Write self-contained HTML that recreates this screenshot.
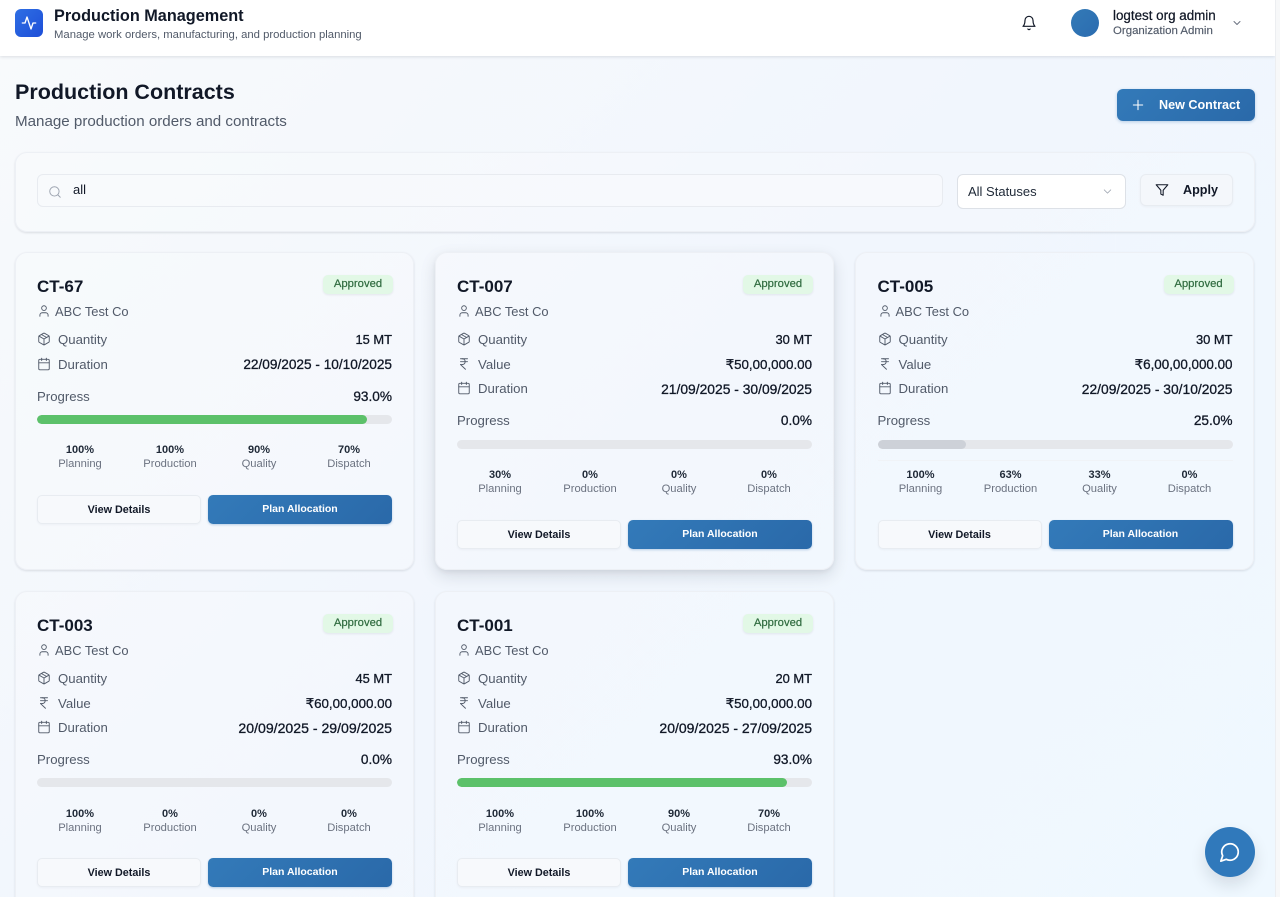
<!DOCTYPE html>
<html lang="en"><head><meta charset="utf-8"><title>Production Contracts</title>
<style>
*{box-sizing:border-box;margin:0;padding:0}
html,body{width:1280px;height:897px;overflow:hidden}
body{position:relative;font-family:"Liberation Sans",sans-serif;background:linear-gradient(135deg,#f8fafc 0%,#f1f6fd 50%,#eff8ff 100%);color:#111827}
.t{position:absolute;white-space:nowrap;line-height:20px;height:20px}
svg.i{position:absolute;fill:none;stroke:currentColor;stroke-width:2;stroke-linecap:round;stroke-linejoin:round}
.hdr{position:absolute;left:0;top:0;width:1275px;height:56px;background:#fff;box-shadow:0 1px 3px rgba(15,23,42,.12)}
.sb{position:absolute;left:1275px;top:0;width:5px;height:897px;background:#f7f8f9;border-left:1px solid #eceef1}
.logo{position:absolute;left:15px;top:9px;width:28px;height:28px;border-radius:6px;background:linear-gradient(135deg,#2f6fe4,#1d4ed8);color:#fff}
.avatar{position:absolute;left:1071px;top:9px;width:28px;height:28px;border-radius:50%;background:linear-gradient(135deg,#337ab7,#2b6cb0)}
.newb{position:absolute;left:1117px;top:89px;width:138px;height:32px;border-radius:6px;background:linear-gradient(135deg,#337ab9,#2a69a9);box-shadow:0 1px 3px rgba(43,108,176,.3);color:#fff}
.filter{position:absolute;left:15px;top:152px;width:1240px;height:80px;border-radius:12px;background:rgba(255,255,255,.18);border:1px solid #edf0f5;box-shadow:0 1px 2px rgba(15,23,42,.12)}
.search{position:absolute;left:37px;top:174px;width:906px;height:33px;border-radius:6px;background:rgba(248,250,252,.7);border:1px solid #e8ebf0}
.sel{position:absolute;left:957px;top:174px;width:169px;height:35px;border-radius:6px;background:#fff;border:1px solid #dde1e7}
.apply{position:absolute;left:1140px;top:174px;width:93px;height:32px;border-radius:6px;background:#f4f7fb;border:1px solid #e8ecf1;box-shadow:0 1px 2px rgba(15,23,42,.04)}
.c{position:absolute;width:399px;height:318px;border-radius:12px;background:rgba(255,255,255,.18);border:1px solid #edf0f5;box-shadow:0 1px 2px rgba(15,23,42,.12)}
.c.hov{box-shadow:0 6px 16px rgba(15,23,42,.12),0 2px 5px rgba(15,23,42,.06)}
.c>*{margin:-1px 0 0 -1px}
.c>.t{margin-top:1px}
.c>.ti{margin-top:0}
.c.c3>*{margin-left:-.5px}
.c.c3>.va{margin-left:0;margin-right:-.5px}
.ti{left:22px;top:24px;font-size:17px;font-weight:700;color:#111827}
.bd{left:308px;top:23px;width:70px;height:19px;border-radius:5px;background:#e2f8e6;box-shadow:0 1px 2px rgba(15,23,42,.08);color:#2f6b3f;font-size:11.3px;line-height:18px;text-align:center;position:absolute;-webkit-text-stroke:.2px #2f6b3f}
.cu{left:40px;top:48px;font-size:12.9px;color:#515a69}
.la{left:43px;font-size:13.2px;color:#515a69}
.va{right:21px;font-size:13.65px;color:#111827;-webkit-text-stroke:.3px #111827}
.mt{font-size:12.9px}
.ru{font-size:13.35px}
.pl{left:22px;font-size:13.2px;color:#515a69}
.bar{position:absolute;left:22px;width:355px;height:9px;border-radius:5px;background:#e5e7eb;overflow:hidden}
.bar i{display:block;height:9px;border-radius:5px}
.st{width:90px;text-align:center}
.sv{font-size:11px;font-weight:700;color:#1f2937}
.sl{font-size:11.2px;color:#6b7280}
.s1{left:20px}.s2{left:110px}.s3{left:199px}.s4{left:289px}
.bv{position:absolute;left:22px;width:164px;height:29px;border-radius:5px;background:#f7f9fc;border:1px solid #e8ecf1;box-shadow:0 1px 2px rgba(15,23,42,.04);font-size:10.8px;font-weight:700;color:#111827;line-height:28px;text-align:center}
.bp{position:absolute;left:193px;width:184px;height:29px;border-radius:5px;background:linear-gradient(135deg,#337ab9,#2a69a9);box-shadow:0 1px 2px rgba(43,108,176,.3);font-size:10.5px;font-weight:700;color:#fff;line-height:29px;text-align:center}
.fab{position:absolute;left:1205px;top:827px;width:50px;height:50px;border-radius:50%;background:#3079bb;color:#fff;box-shadow:0 8px 16px rgba(15,23,42,.12)}
</style></head><body>
<svg width="0" height="0" style="position:absolute"><defs>
<symbol id="user" viewBox="0 0 24 24"><path d="M19 21v-2a4 4 0 0 0-4-4H9a4 4 0 0 0-4 4v2"/><circle cx="12" cy="7" r="4"/></symbol>
<symbol id="box" viewBox="0 0 24 24"><path d="M21 16V8a2 2 0 0 0-1-1.73l-7-4a2 2 0 0 0-2 0l-7 4A2 2 0 0 0 3 8v8a2 2 0 0 0 1 1.73l7 4a2 2 0 0 0 2 0l7-4A2 2 0 0 0 21 16z"/><path d="m7.5 4.27 9 5.15"/><path d="M3.3 7 12 12l8.7-5"/><path d="M12 22V12"/></symbol>
<symbol id="cal" viewBox="0 0 24 24"><path d="M8 2v4"/><path d="M16 2v4"/><rect x="3" y="4" width="18" height="18" rx="2"/><path d="M3 10h18"/></symbol>
<symbol id="inr" viewBox="0 0 24 24"><path d="M6 3h12"/><path d="M6 8h12"/><path d="m6 13 8.5 8"/><path d="M6 13h3"/><path d="M9 13c6.667 0 6.667-10 0-10"/></symbol>
</defs></svg>

<div class="hdr"></div>
<div class="sb"></div>
<div class="logo"><svg class="i" style="left:6px;top:6px" width="16" height="16" viewBox="0 0 24 24"><path d="M22 12h-4l-3 9L9 3l-3 9H2"/></svg></div>
<div class="t" style="left:54px;top:6px;font-size:16.25px;font-weight:700;color:#111827">Production Management</div>
<div class="t" style="left:54px;top:25px;font-size:11.3px;color:#515a69">Manage work orders, manufacturing, and production planning</div>
<svg class="i" style="left:1021px;top:15px;color:#111827;stroke-width:1.8" width="16" height="16" viewBox="0 0 24 24"><path d="M6 8a6 6 0 0 1 12 0c0 7 3 9 3 9H3s3-2 3-9"/><path d="M10.3 21a1.94 1.94 0 0 0 3.4 0"/></svg>
<div class="avatar"></div>
<div class="t" style="left:1113px;top:6px;font-size:13.4px;color:#111827;-webkit-text-stroke:.25px #111827">logtest org admin</div>
<div class="t" style="left:1113px;top:21px;font-size:11.45px;color:#515a69;-webkit-text-stroke:.15px #515a69">Organization Admin</div>
<svg class="i" style="left:1231px;top:17px;color:#6b7280" width="12" height="12" viewBox="0 0 24 24"><path d="m6 9 6 6 6-6"/></svg>

<div class="t" style="left:15px;top:80px;height:24px;line-height:24px;font-size:21.5px;font-weight:700;color:#111827">Production Contracts</div>
<div class="t" style="left:15px;top:111px;line-height:22px;height:22px;font-size:15.15px;color:#515a69">Manage production orders and contracts</div>
<div class="newb"><svg class="i" style="left:13px;top:8px;stroke-width:1.6" width="16" height="16" viewBox="0 0 24 24"><path d="M5 12h14"/><path d="M12 5v14"/></svg><div class="t" style="left:42px;top:6px;font-size:12.6px;font-weight:700">New Contract</div></div>

<div class="filter"></div>
<div class="search"></div>
<svg class="i" style="left:48px;top:185px;color:#9ca3af;stroke-width:1.6" width="14" height="14" viewBox="0 0 24 24"><circle cx="11" cy="11" r="8"/><path d="m21 21-4.3-4.3"/></svg>
<div class="t" style="left:73px;top:180px;font-size:13px;color:#111827">all</div>
<div class="sel"></div>
<div class="t" style="left:968px;top:182px;font-size:13px;color:#1f2937">All Statuses</div>
<svg class="i" style="left:1101px;top:185px;color:#9ca3af;stroke-width:1.6" width="13" height="13" viewBox="0 0 24 24"><path d="m6 9 6 6 6-6"/></svg>
<div class="apply"></div>
<svg class="i" style="left:1155px;top:183px;color:#111827;stroke-width:1.8" width="14" height="14" viewBox="0 0 24 24"><polygon points="22 3 2 3 10 12.46 10 19 14 21 14 12.46 22 3"/></svg>
<div class="t" style="left:1183px;top:180px;font-size:12.6px;font-weight:700;color:#111827">Apply</div>

<!-- Card 1 -->
<div class="c" style="left:15px;top:252px">
<div class="t ti">CT-67</div><div class="bd">Approved</div>
<svg class="i" style="left:22px;top:52px;color:#515a69;stroke-width:1.6" width="14" height="14"><use href="#user"/></svg><div class="t cu">ABC Test Co</div>
<svg class="i" style="left:22px;top:80px;color:#515a69;stroke-width:1.6" width="14" height="14"><use href="#box"/></svg><div class="t la" style="top:76px">Quantity</div><div class="t va mt" style="top:76px">15 MT</div>
<svg class="i" style="left:22px;top:105px;color:#515a69;stroke-width:1.6" width="14" height="14"><use href="#cal"/></svg><div class="t la" style="top:101px">Duration</div><div class="t va" style="top:101px">22/09/2025 - 10/10/2025</div>
<div class="t pl" style="top:133px">Progress</div><div class="t va" style="top:133px">93.0%</div>
<div class="bar" style="top:163px"><i style="width:330px;background:#5cc16a"></i></div>
<div class="t st sv s1" style="top:186px">100%</div><div class="t st sl s1" style="top:200px">Planning</div>
<div class="t st sv s2" style="top:186px">100%</div><div class="t st sl s2" style="top:200px">Production</div>
<div class="t st sv s3" style="top:186px">90%</div><div class="t st sl s3" style="top:200px">Quality</div>
<div class="t st sv s4" style="top:186px">70%</div><div class="t st sl s4" style="top:200px">Dispatch</div>
<div class="bv" style="top:243px">View Details</div><div class="bp" style="top:243px">Plan Allocation</div>
</div>

<!-- Card 2 -->
<div class="c hov" style="left:435px;top:252px">
<div class="t ti">CT-007</div><div class="bd">Approved</div>
<svg class="i" style="left:22px;top:52px;color:#515a69;stroke-width:1.6" width="14" height="14"><use href="#user"/></svg><div class="t cu">ABC Test Co</div>
<svg class="i" style="left:22px;top:80px;color:#515a69;stroke-width:1.6" width="14" height="14"><use href="#box"/></svg><div class="t la" style="top:76px">Quantity</div><div class="t va mt" style="top:76px">30 MT</div>
<svg class="i" style="left:22px;top:105px;color:#515a69;stroke-width:1.6" width="14" height="14"><use href="#inr"/></svg><div class="t la" style="top:101px">Value</div><div class="t va ru" style="top:101px">₹50,00,000.00</div>
<svg class="i" style="left:22px;top:129px;color:#515a69;stroke-width:1.6" width="14" height="14"><use href="#cal"/></svg><div class="t la" style="top:125px">Duration</div><div class="t va" style="top:125px;font-size:13.85px">21/09/2025 - 30/09/2025</div>
<div class="t pl" style="top:157px">Progress</div><div class="t va" style="top:157px">0.0%</div>
<div class="bar" style="top:188px"></div>
<div class="t st sv s1" style="top:211px">30%</div><div class="t st sl s1" style="top:225px">Planning</div>
<div class="t st sv s2" style="top:211px">0%</div><div class="t st sl s2" style="top:225px">Production</div>
<div class="t st sv s3" style="top:211px">0%</div><div class="t st sl s3" style="top:225px">Quality</div>
<div class="t st sv s4" style="top:211px">0%</div><div class="t st sl s4" style="top:225px">Dispatch</div>
<div class="bv" style="top:267.5px">View Details</div><div class="bp" style="top:267.5px">Plan Allocation</div>
</div>

<!-- Card 3 -->
<div class="c c3" style="left:855px;top:252px">
<div class="t ti">CT-005</div><div class="bd">Approved</div>
<svg class="i" style="left:22px;top:52px;color:#515a69;stroke-width:1.6" width="14" height="14"><use href="#user"/></svg><div class="t cu">ABC Test Co</div>
<svg class="i" style="left:22px;top:80px;color:#515a69;stroke-width:1.6" width="14" height="14"><use href="#box"/></svg><div class="t la" style="top:76px">Quantity</div><div class="t va mt" style="top:76px">30 MT</div>
<svg class="i" style="left:22px;top:105px;color:#515a69;stroke-width:1.6" width="14" height="14"><use href="#inr"/></svg><div class="t la" style="top:101px">Value</div><div class="t va" style="top:101px;font-size:13.4px">₹6,00,00,000.00</div>
<svg class="i" style="left:22px;top:129px;color:#515a69;stroke-width:1.6" width="14" height="14"><use href="#cal"/></svg><div class="t la" style="top:125px">Duration</div><div class="t va" style="top:125px;font-size:13.83px">22/09/2025 - 30/10/2025</div>
<div class="t pl" style="top:157px">Progress</div><div class="t va" style="top:157px">25.0%</div>
<div class="bar" style="top:188px"><i style="width:88px;background:#cdd1d8"></i></div>
<div style="position:absolute;left:22px;top:208px;width:355px;height:1px;background:#f0f3f7"></div>
<div class="t st sv s1" style="top:211px">100%</div><div class="t st sl s1" style="top:225px">Planning</div>
<div class="t st sv s2" style="top:211px">63%</div><div class="t st sl s2" style="top:225px">Production</div>
<div class="t st sv s3" style="top:211px">33%</div><div class="t st sl s3" style="top:225px">Quality</div>
<div class="t st sv s4" style="top:211px">0%</div><div class="t st sl s4" style="top:225px">Dispatch</div>
<div class="bv" style="top:267.5px">View Details</div><div class="bp" style="top:267.5px">Plan Allocation</div>
</div>

<!-- Card 4 -->
<div class="c" style="left:15px;top:591px">
<div class="t ti">CT-003</div><div class="bd">Approved</div>
<svg class="i" style="left:22px;top:52px;color:#515a69;stroke-width:1.6" width="14" height="14"><use href="#user"/></svg><div class="t cu">ABC Test Co</div>
<svg class="i" style="left:22px;top:80px;color:#515a69;stroke-width:1.6" width="14" height="14"><use href="#box"/></svg><div class="t la" style="top:76px">Quantity</div><div class="t va mt" style="top:76px">45 MT</div>
<svg class="i" style="left:22px;top:105px;color:#515a69;stroke-width:1.6" width="14" height="14"><use href="#inr"/></svg><div class="t la" style="top:101px">Value</div><div class="t va ru" style="top:101px">₹60,00,000.00</div>
<svg class="i" style="left:22px;top:129px;color:#515a69;stroke-width:1.6" width="14" height="14"><use href="#cal"/></svg><div class="t la" style="top:125px">Duration</div><div class="t va" style="top:125px;font-size:14.1px">20/09/2025 - 29/09/2025</div>
<div class="t pl" style="top:157px">Progress</div><div class="t va" style="top:157px">0.0%</div>
<div class="bar" style="top:187px"></div>
<div class="t st sv s1" style="top:211px">100%</div><div class="t st sl s1" style="top:225px">Planning</div>
<div class="t st sv s2" style="top:211px">0%</div><div class="t st sl s2" style="top:225px">Production</div>
<div class="t st sv s3" style="top:211px">0%</div><div class="t st sl s3" style="top:225px">Quality</div>
<div class="t st sv s4" style="top:211px">0%</div><div class="t st sl s4" style="top:225px">Dispatch</div>
<div class="bv" style="top:267px">View Details</div><div class="bp" style="top:267px">Plan Allocation</div>
</div>

<!-- Card 5 -->
<div class="c" style="left:435px;top:591px">
<div class="t ti">CT-001</div><div class="bd">Approved</div>
<svg class="i" style="left:22px;top:52px;color:#515a69;stroke-width:1.6" width="14" height="14"><use href="#user"/></svg><div class="t cu">ABC Test Co</div>
<svg class="i" style="left:22px;top:80px;color:#515a69;stroke-width:1.6" width="14" height="14"><use href="#box"/></svg><div class="t la" style="top:76px">Quantity</div><div class="t va mt" style="top:76px">20 MT</div>
<svg class="i" style="left:22px;top:105px;color:#515a69;stroke-width:1.6" width="14" height="14"><use href="#inr"/></svg><div class="t la" style="top:101px">Value</div><div class="t va ru" style="top:101px">₹50,00,000.00</div>
<svg class="i" style="left:22px;top:129px;color:#515a69;stroke-width:1.6" width="14" height="14"><use href="#cal"/></svg><div class="t la" style="top:125px">Duration</div><div class="t va" style="top:125px;font-size:14px">20/09/2025 - 27/09/2025</div>
<div class="t pl" style="top:157px">Progress</div><div class="t va" style="top:157px">93.0%</div>
<div class="bar" style="top:187px"><i style="width:330px;background:#5cc16a"></i></div>
<div class="t st sv s1" style="top:211px">100%</div><div class="t st sl s1" style="top:225px">Planning</div>
<div class="t st sv s2" style="top:211px">100%</div><div class="t st sl s2" style="top:225px">Production</div>
<div class="t st sv s3" style="top:211px">90%</div><div class="t st sl s3" style="top:225px">Quality</div>
<div class="t st sv s4" style="top:211px">70%</div><div class="t st sl s4" style="top:225px">Dispatch</div>
<div class="bv" style="top:267px">View Details</div><div class="bp" style="top:267px">Plan Allocation</div>
</div>

<div class="fab"><svg class="i" style="left:14px;top:14px;stroke-width:1.9" width="22" height="22" viewBox="0 0 24 24"><path d="M7.9 20A9 9 0 1 0 4 16.1L2 22Z"/></svg></div>
</body></html>
